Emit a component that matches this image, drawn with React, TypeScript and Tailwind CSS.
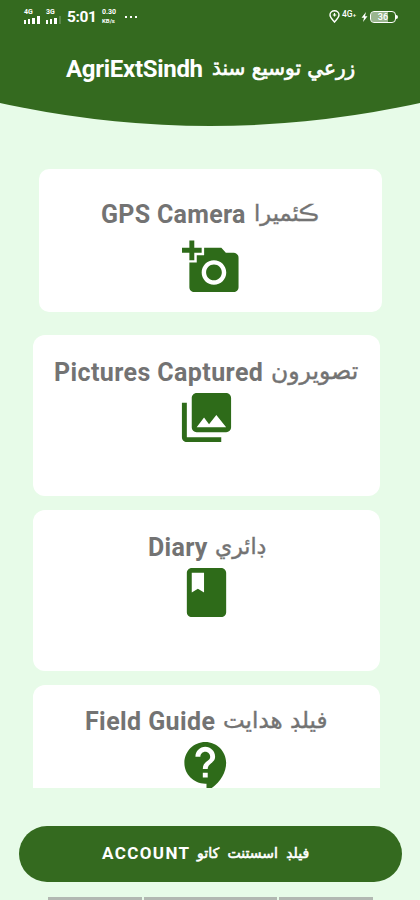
import React from "react";
import { MdAddAPhoto, MdPhotoLibrary, MdBook, MdContactSupport } from "react-icons/md";

const SINDHI = "font-['DejaVu_Sans',sans-serif] whitespace-nowrap";

function Signal({ label, bars }: { label: string; bars: number }) {
  return (
    <div className="flex w-[19px] flex-col">
      <span className="h-[6px] text-[7px] font-bold leading-[6px]">{label}</span>
      <div className="mt-px flex h-[8px] items-end gap-[2px]">
        <i className="h-[4px] w-[2px] bg-white" />
        <i className="h-[5px] w-[2px] bg-white" />
        <i className="h-[6px] w-[3px] bg-white" />
        <i className={bars > 3 ? "h-[8px] w-[3px] bg-white" : "h-[8px] w-[2px] bg-white/20"} />
      </div>
    </div>
  );
}

function StatusBar() {
  return (
    <div className="flex h-[34px] items-start pl-[24px] pr-[22px] pt-[9px]">
      <Signal label="4G" bars={4} />
      <div className="w-[3px]" />
      <Signal label="3G" bars={3} />
      <span className="ml-[2px] w-[35px] whitespace-nowrap text-[15.5px] font-bold leading-[17px] tracking-[-0.4px]">5:01</span>
      <div className="flex w-[18px] flex-col gap-px text-[7px] font-bold leading-[7px]">
        <span>0.30</span>
        <span className="text-[6px]">KB/s</span>
      </div>
      <div className="ml-[5px] mt-[7px] flex gap-[3px]">
        <i className="size-[2px] bg-white" />
        <i className="size-[2px] bg-white" />
        <i className="size-[2px] bg-white" />
      </div>
      <div className="ml-auto flex items-start">
        <svg className="mt-px" width="11" height="13" viewBox="0 0 11 13" fill="none" stroke="white" strokeWidth="1.4">
          <path d="M5.5 12C3.5 9.5 1 7.6 1 5a4.5 4.2 0 0 1 9 0c0 2.600-2.500 4.500-4.500 7Z" />
          <path d="M5.500 3v3.500M3.800 5h3.500" strokeWidth="1.200" />
        </svg>
        <span className="ml-[2px] mt-px w-[19px] whitespace-nowrap text-[8.5px] font-medium leading-[8px]">4G<span className="text-[6px]">+</span></span>
        <svg className="mt-[3px]" width="7" height="10" viewBox="0 0 7 10" fill="white">
          <path d="M5 0 .5 5.700H3L2 10l4.500-5.700H4Z" />
        </svg>
        <div className="ml-[2px] mt-[2px] flex h-[12px] w-[26px] items-center overflow-hidden rounded-[4px] border border-white text-[9px] font-medium leading-none">
          <div className="flex h-full w-[17px] items-center justify-end bg-white/50">36</div>
        </div>
        <i className="mt-[6px] h-[4px] w-[2px] rounded-r bg-white" />
      </div>
    </div>
  );
}

type CardProps = {
  latin: string;
  sindhi: string;
  box: string;
  heading: string;
  latinStyle: string;
  sindhiStyle: string;
  children: React.ReactNode;
};

function Card({ latin, sindhi, box, heading, latinStyle, sindhiStyle, children }: CardProps) {
  return (
    <section className={`flex shrink-0 flex-col bg-white ${box}`}>
      <h2 className={`flex h-[30px] shrink-0 items-baseline whitespace-nowrap text-[25px] font-bold leading-[30px] text-[#737373] ${heading}`}>
        <span className={`shrink-0 ${latinStyle}`}>{latin}</span>
        <span dir="rtl" className={`${SINDHI} mb-[2px] inline-block -translate-y-[2px] font-normal [-webkit-text-stroke:0.4px_#737373] ${sindhiStyle}`}>{sindhi}</span>
      </h2>
      {children}
    </section>
  );
}

export default function App() {
  return (
    <main className="flex h-[900px] w-[420px] flex-col overflow-hidden bg-[#e7fbe8] font-[Roboto,sans-serif]">
      <header className="h-[126px] shrink-0 bg-[#346a1f] text-white [clip-path:circle(970px_at_210px_-844px)]">
        <StatusBar />
        <h1 className="flex h-[68px] items-baseline whitespace-nowrap pl-[66px] pt-[20px] text-[24px] font-bold leading-[30px]">
          <span className="w-[146px] shrink-0 tracking-[-0.3px]">AgriExtSindh</span>
          <span dir="rtl" className="inline-block -translate-y-[2px] whitespace-nowrap font-['DejaVu_Sans',sans-serif] text-[20px] font-normal [-webkit-text-stroke:0.7px_white]">زرعي توسيع سنڌ</span>
        </h1>
      </header>

      <div className="mt-[43px] flex h-[619px] shrink-0 flex-col overflow-hidden pl-[33px]">
        <Card
          latin="GPS Camera" sindhi="ڪئميرا"
          box="ml-[6px] h-[143px] w-[343px] rounded-[10px] pt-[31px]"
          heading="pl-[62px]" latinStyle="w-[153px] tracking-[0.3px]" sindhiStyle="text-[22.5px]"
        >
          <MdAddAPhoto className="ml-[143px] mt-[8px] size-[59px] shrink-0 text-[#2e6b19]" />
        </Card>
        <Card
          latin="Pictures Captured" sindhi="تصويرون"
          box="mt-[23px] h-[161px] w-[347px] rounded-[12px] pt-[23px]"
          heading="pl-[21px]" latinStyle="w-[217px] tracking-[0.4px]" sindhiStyle="text-[23.5px]"
        >
          <MdPhotoLibrary className="ml-[144px] mt-0 size-[59px] shrink-0 text-[#2e6b19]" />
        </Card>
        <Card
          latin="Diary" sindhi="ڊائري"
          box="mt-[14px] h-[161px] w-[347px] rounded-[12px] pt-[23px]"
          heading="pl-[115px]" latinStyle="w-[67px] tracking-[0.3px]" sindhiStyle="text-[22px]"
        >
          <MdBook className="ml-[144px] mt-0 size-[59px] shrink-0 text-[#2e6b19]" />
        </Card>
        <Card
          latin="Field Guide" sindhi="فيلڊ هدايت"
          box="mt-[14px] h-[161px] w-[347px] rounded-[12px] pt-[22px]"
          heading="pl-[52px]" latinStyle="w-[138px] tracking-[0.4px]" sindhiStyle="text-[23px]"
        >
          <MdContactSupport className="ml-[144px] mt-0 size-[59px] shrink-0 text-[#2e6b19]" />
        </Card>
      </div>

      <button className="ml-[19px] mt-[38px] flex h-[56px] w-[383px] shrink-0 items-center whitespace-nowrap rounded-full bg-[#346a1f] pl-[83px] text-[17px] font-bold text-white">
        <span className="w-[95px] shrink-0 text-left tracking-[1.4px]">ACCOUNT</span>
        <span dir="rtl" className="-translate-y-px whitespace-nowrap font-['DejaVu_Sans',sans-serif] text-[14px] font-normal tracking-normal [-webkit-text-stroke:0.6px_white] [word-spacing:4px]">فيلڊ اسستنت کاتو</span>
      </button>

      <div className="ml-[48px] mt-[15px] flex h-[3px] shrink-0 gap-[2px]">
        <i className="w-[94px] bg-[#b2b8b2]" />
        <i className="w-[133px] bg-[#b2b8b2]" />
        <i className="w-[94px] bg-[#b2b8b2]" />
      </div>
    </main>
  );
}
